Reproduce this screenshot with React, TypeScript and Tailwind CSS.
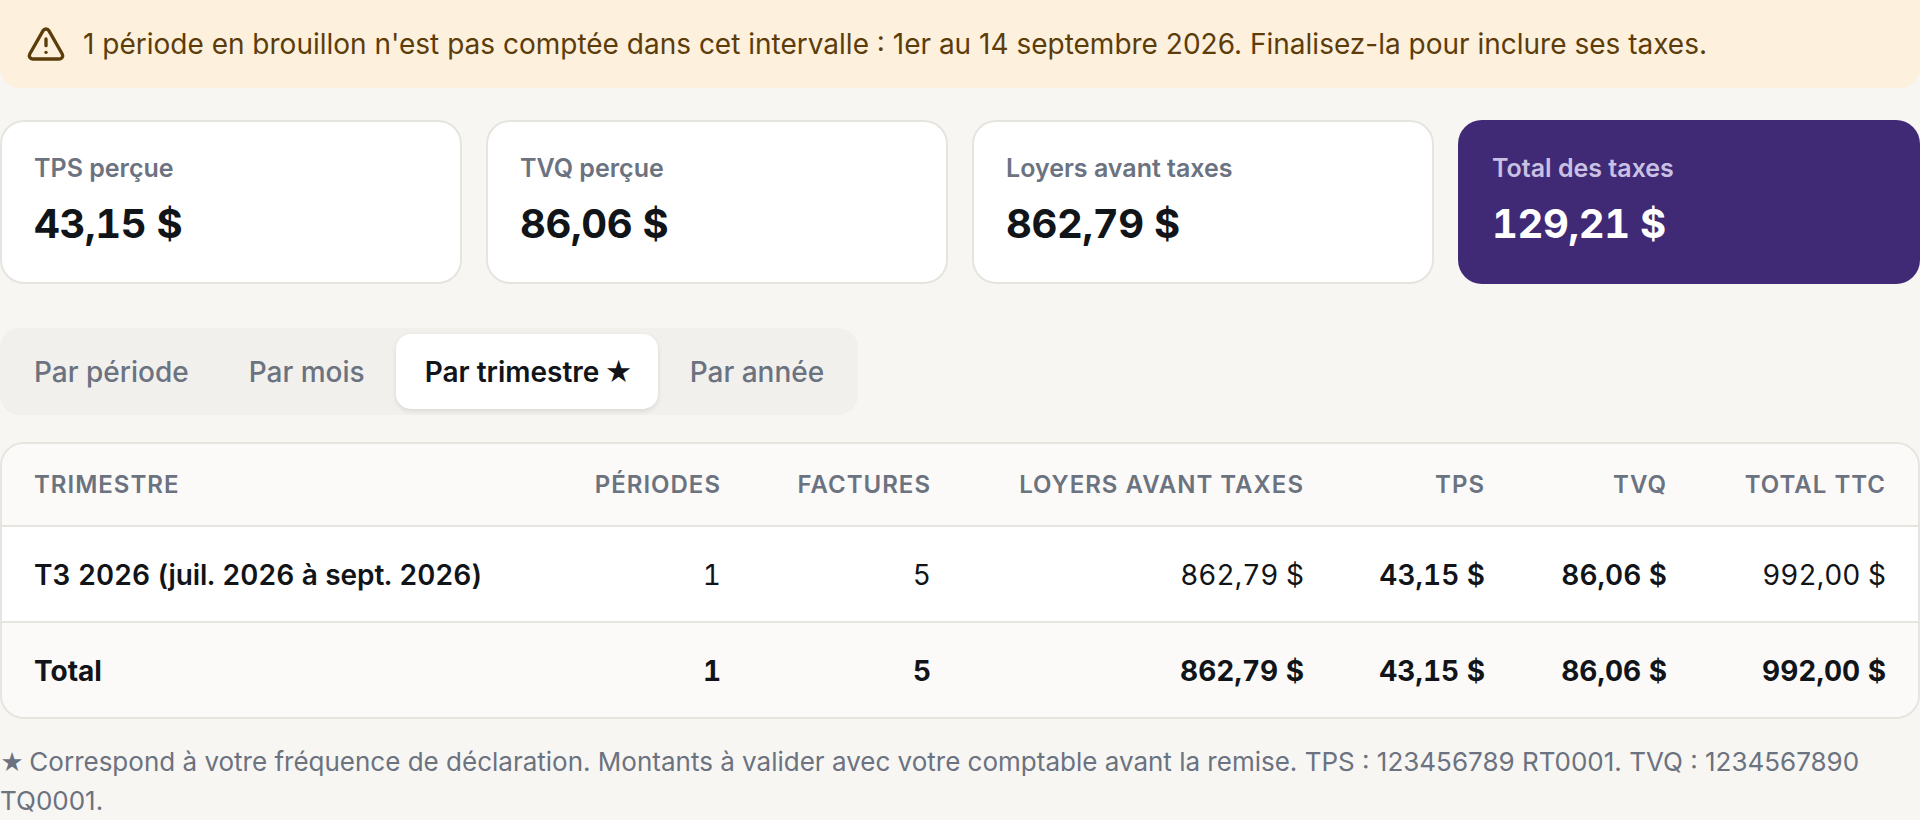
import { TriangleAlert } from "lucide-react";

const cards = [
	{ label: "TPS perçue", value: "43,15 $" },
	{ label: "TVQ perçue", value: "86,06 $" },
	{ label: "Loyers avant taxes", value: "862,79 $" },
];

const headers = ["Périodes", "Factures", "Loyers avant taxes", "TPS", "TVQ", "Total TTC"];

export default function App() {
	return (
		<div className="min-h-[820px] overflow-hidden bg-[#f7f6f3] font-['Inter',sans-serif] text-[#111418]">
			<div className="flex h-[88px] items-center gap-[17px] rounded-b-[20px] bg-[#fdf0dd] px-[26px] text-[28px] text-[#5c3d0a]">
				<TriangleAlert className="size-[40px] shrink-0" strokeWidth={2} />
				<span>
					1 période en brouillon n'est pas comptée dans cet intervalle : 1er au 14 septembre 2026. Finalisez-la pour inclure ses taxes.
				</span>
			</div>

			<div className="mt-[32px] grid grid-cols-4 gap-[24px]">
				{cards.map((card) => (
					<div className="h-[164px] rounded-[24px] border-2 border-[#e6e4df] bg-white px-[32px] pt-[28px]" key={card.label}>
						<div className="text-[25px] font-semibold text-[#6b7280]">{card.label}</div>
						<div className="mt-[8px] text-[40px] font-bold leading-[56px] tracking-[-0.4px] tabular-nums">{card.value}</div>
					</div>
				))}
				<div className="h-[164px] rounded-[24px] bg-[#412a75] px-[34px] pt-[30px]">
					<div className="text-[25px] font-semibold text-[#c9c1e4]">Total des taxes</div>
					<div className="mt-[8px] text-[40px] font-bold leading-[56px] tracking-[-0.4px] text-white tabular-nums">129,21 $</div>
				</div>
			</div>

			<div className="mt-[44px] flex h-[87px] w-[858px] items-center gap-[4px] rounded-[20px] bg-[#f1f0ed] px-[6px] text-[28px] font-medium whitespace-nowrap text-[#6b7280]">
				<button className="h-[75px] px-[28px]" type="button">
					Par période
				</button>
				<button className="h-[75px] px-[28px]" type="button">
					Par mois
				</button>
				<button className="-ml-[1px] h-[75px] rounded-[15px] bg-white pr-[25px] pl-[29px] font-semibold text-[#111418] shadow-[0_2px_5px_rgba(0,0,0,0.1)]" type="button">
					Par trimestre <span className="-ml-[2px] text-[27px] leading-none">★</span>
				</button>
				<button className="h-[75px] px-[28px]" type="button">
					Par année
				</button>
			</div>

			<div className="mt-[27px] overflow-hidden rounded-[24px] border-2 border-[#e6e4df] bg-white">
				<table className="w-full table-fixed border-collapse">
					<colgroup>
						<col className="w-[560px]" />
						<col className="w-[191px]" />
						<col className="w-[210px]" />
						<col className="w-[373px]" />
						<col className="w-[181px]" />
						<col className="w-[182px]" />
						<col />
					</colgroup>
					<thead>
						<tr className="h-[82px] border-b-2 border-[#e6e4df] bg-[#fbfaf8] text-[24px] font-semibold tracking-[1px] text-[#6b7280] uppercase">
							<th className="pl-[32px] text-left font-semibold">Trimestre</th>
							{headers.map((header) => (
								<th className="pr-[32px] text-right font-semibold" key={header}>
									{header}
								</th>
							))}
						</tr>
					</thead>
					<tbody className="text-[28px] tabular-nums">
						<tr className="h-[96px] border-b-2 border-[#e6e4df]">
							<td className="pt-[2px] pl-[32px] font-semibold tracking-[-0.07px]">T3 2026 (juil. 2026 à sept. 2026)</td>
							<td className="pt-[2px] pr-[32px] text-right">1</td>
							<td className="pt-[2px] pr-[32px] text-right">5</td>
							<td className="pt-[2px] pr-[32px] text-right">862,79 $</td>
							<td className="pt-[2px] pr-[32px] text-right font-semibold">43,15 $</td>
							<td className="pt-[2px] pr-[32px] text-right font-semibold">86,06 $</td>
							<td className="pt-[2px] pr-[32px] text-right">992,00 $</td>
						</tr>
						<tr className="h-[95px] bg-[#fbfaf8] font-bold">
							<td className="pt-[2px] pl-[32px]">Total</td>
							<td className="pt-[2px] pr-[32px] text-right">1</td>
							<td className="pt-[2px] pr-[32px] text-right">5</td>
							<td className="pt-[2px] pr-[32px] text-right">862,79 $</td>
							<td className="pt-[2px] pr-[32px] text-right">43,15 $</td>
							<td className="pt-[2px] pr-[32px] text-right">86,06 $</td>
							<td className="pt-[2px] pr-[32px] text-right">992,00 $</td>
						</tr>
					</tbody>
				</table>
			</div>

			<p className="mt-[23px] text-[26px] leading-[39px] text-[#6b7280]">
				<span className="-mr-[2px] text-[23px] leading-none">★</span> Correspond à votre fréquence de déclaration. Montants à valider avec votre comptable avant la remise. TPS : 123456789 RT0001. TVQ : 1234567890 TQ0001.
			</p>
		</div>
	);
}
